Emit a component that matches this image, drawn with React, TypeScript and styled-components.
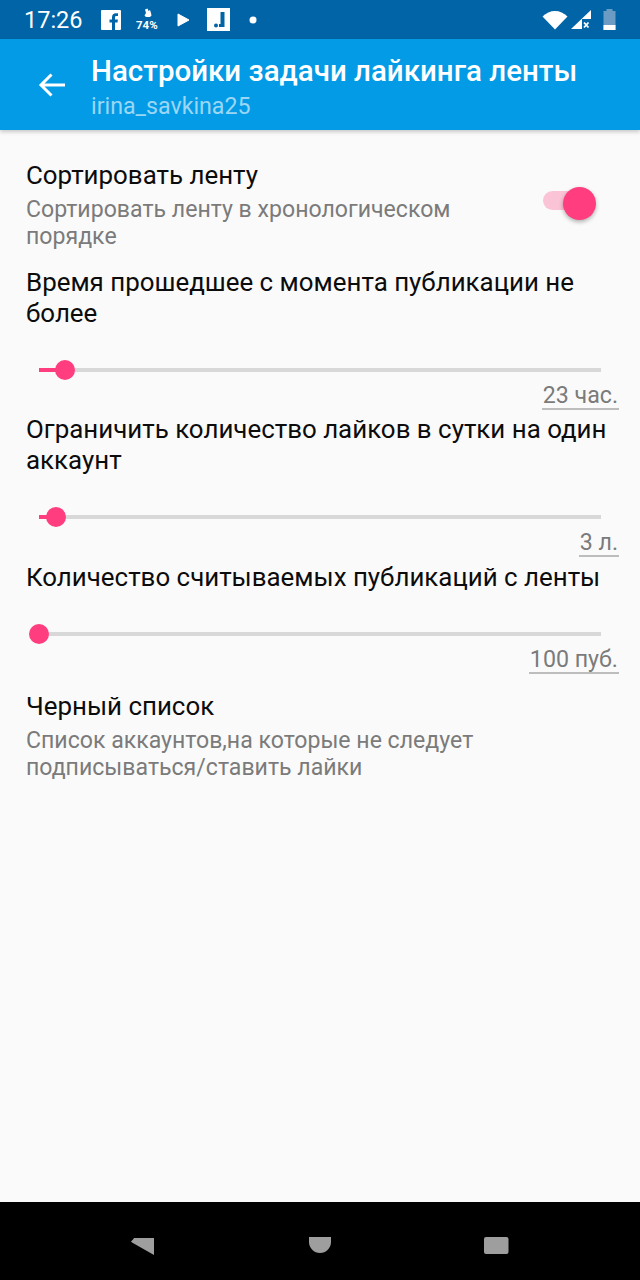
import React from "react";
import styled, { createGlobalStyle } from "styled-components";

const Global = createGlobalStyle`
  html, body { margin: 0; padding: 0; background: #fafafa; }
  * { box-sizing: border-box; }
`;

const Screen = styled.div`
  width: 640px;
  height: 1280px;
  display: flex;
  flex-direction: column;
  font-family: Roboto, "Liberation Sans", sans-serif;
  background: #fafafa;
  overflow: hidden;
`;

const StatusBar = styled.div`
  height: 39px;
  background: #0064a6;
  display: flex;
  align-items: center;
  color: #fff;
  padding: 0 0 0 24px;
  flex: none;
`;
const Clock = styled.span`
  font-size: 23.5px;
  font-weight: 400;
  width: 77px;
`;
const StatusIcons = styled.div`
  display: flex;
  align-items: center;
  flex: 1;
`;
const SysIcons = styled.div`
  display: flex;
  align-items: center;
  margin-right: 24px;
`;

const AppBar = styled.header`
  height: 91px;
  flex: none;
  background: #039be5;
  display: flex;
  align-items: flex-start;
  box-shadow: 0 2px 4px rgba(0, 0, 0, 0.2);
  position: relative;
`;
const BackButton = styled.div`
  width: 92px;
  height: 91px;
  display: flex;
  align-items: center;
  padding-left: 38px;
  flex: none;
`;
const Titles = styled.div`
  display: flex;
  flex-direction: column;
  padding-top: 15px;
  margin-left: -1px;
`;
const Title = styled.div`
  color: #fff;
  font-size: 29.5px;
  line-height: 34px;
  font-weight: 500;
  white-space: nowrap;
`;
const Subtitle = styled.div`
  color: #9bd7f5;
  font-size: 23.2px;
  line-height: 32px;
  margin-top: 2px;
`;

const Content = styled.main`
  flex: 1;
  display: flex;
  flex-direction: column;
  padding: 30px 21px 0 26px;
`;

const PrimaryText = styled.div`
  color: #0c0c0c;
  font-size: 25.9px;
  line-height: 31px;
`;
const SecondaryText = styled.div`
  color: #7b7b7b;
  font-size: 23.1px;
  line-height: 27px;
  margin-top: 5px;
`;

const SwitchRow = styled.div`
  display: flex;
  justify-content: space-between;
  height: 107px;
`;
const SwitchText = styled.div`
  width: 470px;
`;
const SwitchTrack = styled.div`
  width: 52px;
  height: 19px;
  border-radius: 10px;
  background: #fbc4d6;
  position: relative;
  margin: 31px 24px 0 0;
`;
const SwitchThumb = styled.div`
  position: absolute;
  width: 33px;
  height: 33px;
  border-radius: 50%;
  background: #ff3d7f;
  top: -4px;
  right: -1px;
  box-shadow: 0 2px 4px rgba(0, 0, 0, 0.3);
`;

const SliderBlock = styled.section<{ $height: number }>`
  height: ${(p) => p.$height}px;
  display: flex;
  flex-direction: column;
`;
const SliderTrack = styled.div`
  height: 4px;
  margin: 39px 18px 0 13px;
  background: #d8d8d8;
  position: relative;
  flex: none;
`;
const SliderFill = styled.div`
  position: absolute;
  left: 0;
  top: 0;
  height: 4px;
  background: #ff3d7f;
`;
const SliderThumb = styled.div`
  position: absolute;
  top: -8px;
  width: 20px;
  height: 20px;
  margin-left: -10px;
  border-radius: 50%;
  background: #ff3d7f;
`;
const ValueRow = styled.div`
  display: flex;
  justify-content: flex-end;
  margin-top: 10px;
`;
const Value = styled.span`
  color: #7b7b7b;
  font-size: 23.2px;
  line-height: 26px;
  padding: 0 1px;
  border-bottom: 2px solid #bdbdbd;
`;

const BlackList = styled.section`
  margin-top: 1px;
`;

const NavBar = styled.nav`
  height: 78px;
  flex: none;
  background: #000;
  display: flex;
  align-items: flex-start;
  padding-top: 35px;
  position: relative;
`;
const NavSlot = styled.div<{ $left: number }>`
  margin-left: ${(p) => p.$left}px;
  display: flex;
`;

function Slider({ value }: { value: number }) {
  return (
    <SliderTrack>
      <SliderFill style={{ width: value }} />
      <SliderThumb style={{ left: value }} />
    </SliderTrack>
  );
}

export default function App() {
  return (
    <Screen>
      <Global />
      <StatusBar>
        <Clock>17:26</Clock>
        <StatusIcons>
          <svg width="20" height="20" viewBox="0 0 20 20">
            <rect width="20" height="20" rx="1" fill="#fff" />
            <path d="M14 20v-7.5h2.5l.4-3H14V7.6c0-.9.3-1.5 1.5-1.5H17V3.4c-.3 0-1.2-.1-2.2-.1-2.2 0-3.800 1.400-3.800 3.900v2.300H8.500v3H11V20z" fill="#0064a6" />
          </svg>
          <svg width="24" height="24" viewBox="0 0 24 24" style={{ marginLeft: 15 }}>
            <path d="M9 1.500l2.500-1 1 2.500 1.500-1 1 3 .5 2.500-1.500 1.500h-4L8.500 7.500l1.500-2.500z" fill="#fff" />
            <text x="0" y="21" fontSize="11.500" fontWeight="700" fill="#fff" fontFamily="Roboto, sans-serif">74%</text>
          </svg>
          <svg width="14" height="16" viewBox="0 0 14 16" style={{ marginLeft: 17 }}>
            <path d="M1 2v12l11-6z" fill="#fff" stroke="#fff" strokeLinejoin="round" />
          </svg>
          <svg width="23" height="23" viewBox="0 0 23 23" style={{ marginLeft: 16 }}>
            <rect width="23" height="23" fill="#fff" />
            <path d="M13.500 4h4v15h-5.500v-3h1.500z" fill="#0064a6" />
            <circle cx="9" cy="17.500" r="2" fill="#0064a6" />
          </svg>
          <svg width="10" height="10" viewBox="0 0 10 10" style={{ marginLeft: 18 }}>
            <circle cx="5" cy="5" r="3.500" fill="#fff" />
          </svg>
        </StatusIcons>
        <SysIcons>
          <svg width="26" height="20" viewBox="0 0 26 20">
            <path d="M0.500 6.500C4 3 8.500 1 13 1s9 2 12.500 5.500L13 19.500z" fill="#fff" />
          </svg>
          <svg width="21" height="20" viewBox="0 0 21 20" style={{ marginLeft: 3 }}>
            <path d="M20 0v9h-9v10H0z" fill="#fff" />
            <path d="M13 12.500l4.500 5M17.500 12.500l-4.500 5" stroke="#fff" strokeWidth="1.800" />
          </svg>
          <svg width="13" height="21" viewBox="0 0 13 21" style={{ marginLeft: 11 }}>
            <path d="M3.500 0h6v2H12.500v19H.5V2h3z" fill="#6c9bc4" />
            <rect x=".5" y="16" width="12" height="5" fill="#fff" />
          </svg>
        </SysIcons>
      </StatusBar>

      <AppBar>
        <BackButton>
          <svg width="28" height="26" viewBox="0 0 28 26" fill="none" stroke="#fff" strokeWidth="3">
            <path d="M27 13H3M13.500 2.500 3 13l10.500 10.500" />
          </svg>
        </BackButton>
        <Titles>
          <Title>Настройки задачи лайкинга ленты</Title>
          <Subtitle>irina_savkina25</Subtitle>
        </Titles>
      </AppBar>

      <Content>
        <SwitchRow>
          <SwitchText>
            <PrimaryText>Сортировать ленту</PrimaryText>
            <SecondaryText>Сортировать ленту в хронологическом порядке</SecondaryText>
          </SwitchText>
          <SwitchTrack>
            <SwitchThumb />
          </SwitchTrack>
        </SwitchRow>

        <SliderBlock $height={147}>
          <PrimaryText>Время прошедшее с момента публикации не более</PrimaryText>
          <Slider value={26} />
          <ValueRow>
            <Value>23 час.</Value>
          </ValueRow>
        </SliderBlock>

        <SliderBlock $height={148}>
          <PrimaryText>Ограничить количество лайков в сутки на один аккаунт</PrimaryText>
          <Slider value={17} />
          <ValueRow>
            <Value>3 л.</Value>
          </ValueRow>
        </SliderBlock>

        <SliderBlock $height={128}>
          <PrimaryText>Количество считываемых публикаций с ленты</PrimaryText>
          <Slider value={0} />
          <ValueRow>
            <Value>100 пуб.</Value>
          </ValueRow>
        </SliderBlock>

        <BlackList>
          <PrimaryText>Черный список</PrimaryText>
          <SecondaryText>Список аккаунтов,на которые не следует подписываться/ставить лайки</SecondaryText>
        </BlackList>
      </Content>

      <NavBar>
        <NavSlot $left={130}>
          <svg width="25" height="19" viewBox="0 0 25 19">
            <path d="M24 1v17L2 5.500 1 4.500 3 2.500 4 1z" fill="#9e9e9e" />
          </svg>
        </NavSlot>
        <NavSlot $left={153}>
          <svg width="24" height="17" viewBox="0 0 24 17">
            <path d="M1 0h22v5a11 11 0 0 1-22 0z" fill="#9e9e9e" />
          </svg>
        </NavSlot>
        <NavSlot $left={151}>
          <svg width="26" height="17" viewBox="0 0 26 17">
            <rect x="1" width="24.500" height="17" rx="2" fill="#9e9e9e" />
          </svg>
        </NavSlot>
      </NavBar>
    </Screen>
  );
}
